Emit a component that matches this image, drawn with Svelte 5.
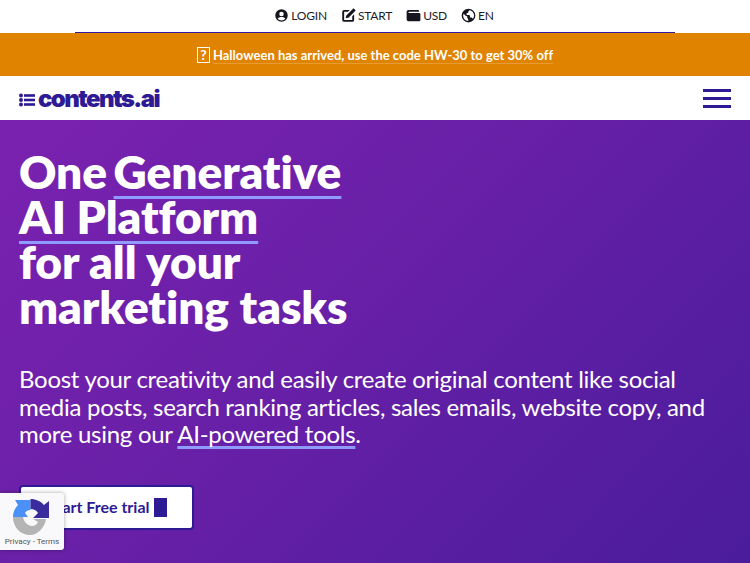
<script>
  const top = [
    { label: 'LOGIN', d: 'M12 2a10 10 0 1 0 0 20 10 10 0 0 0 0-20zm0 4a3.6 3.6 0 1 1 0 7.2A3.6 3.6 0 0 1 12 6zm0 14a8 8 0 0 1-6.2-2.9c.8-1.6 3.4-2.6 6.2-2.6s5.400 1 6.200 2.600A8 8 0 0 1 12 20z' },
    { label: 'START', d: 'M2 6a3 3 0 0 1 3-3h9l-3 3H5v13h13v-6l3-3v9a3 3 0 0 1-3 3H5a3 3 0 0 1-3-3zM20 0.500l3.500 3.500L12 15.500l-4.500 1 1-4.500z' },
    { label: 'USD', d: 'M4 3h15a2 2 0 0 1 2 2v1H5a1 1 0 0 0 0 2h16a2 2 0 0 1 2 2v9a2 2 0 0 1-2 2H4a3 3 0 0 1-3-3V6a3 3 0 0 1 3-3z' },
    { label: 'EN', d: 'M12 1a11 11 0 1 0 0 22 11 11 0 0 0 0-22zM3.500 12c0-1.100.2-2.100.6-3l3.400 3.500 2.500 1v2.500l1.500 1.500v3.400A8.500 8.500 0 0 1 3.500 12zm15.500 5.200-2-2.200h-2.500v-2.500l-1.500-1.500h-4v-2.500l2.500-1V6l2-2.300h1A8.500 8.500 0 0 1 19 17.200z' }
  ];
</script>

<div class="top">
  <div class="top-inner">
    {#each top as item}
      <a class="top-item" href="#top">
        <svg viewBox="0 0 24 24" class="top-icon"><path d={item.d} fill-rule="evenodd" /></svg>
        <span>{item.label}</span>
      </a>
    {/each}
  </div>
</div>

<div class="promo"><span class="box">?</span><span class="promo-text">Halloween has arrived, use the code HW-30 to get 30% off</span></div>

<nav class="nav">
  <a class="logo" href="#top">
    <svg viewBox="0 0 16 14" class="logo-icon">
      <circle cx="2" cy="2.500" r="2" /><circle cx="2" cy="7" r="2" /><circle cx="2" cy="11.500" r="2" />
      <rect x="5" y="1.200" width="11" height="2.600" /><rect x="5" y="5.700" width="11" height="2.600" /><rect x="5" y="10.200" width="11" height="2.600" />
    </svg>
    <span>contents.ai</span>
  </a>
  <div class="burger"><i></i><i></i><i></i></div>
</nav>

<main class="hero">
  <h1>One <span class="u first">Generative</span><br /><span class="u">AI Platform</span><br />for all your<br />marketing tasks</h1>
  <p>Boost your creativity and easily create original content like social media posts, search ranking articles, sales emails, website copy, and more using our <a href="#top">AI-powered tools</a>.</p>
  <a class="cta" href="#top">Start Free trial <span class="square"></span></a>
</main>

<div class="recaptcha">
  <svg viewBox="0 0 36 36" class="rc-icon">
    <path d="M0 18C0 13 2 9 5 6L2 1H17.500V11C15 11 13 12 12 14L15 18Z" fill="#4a90f7" />
    <path d="M17.500 0C23 0 28 2.500 31 6L36 2V19H20L25 14C23 11 21 10 17.500 10Z" fill="#3a2c9c" />
    <path d="M0 18H10C11 23.500 15 27 19 27C22 27 24 25 25 23L20 20H33C32 28 25 36 17 36C7 36 0 28 0 18Z" fill="#b4b4b4" />
  </svg>
  <div class="rc-text">Privacy - Terms</div>
</div>

<style>
  :global(body) {
    margin: 0;
    font-family: Lato, sans-serif;
    font-variant-ligatures: none;
    height: 563px;
    overflow: hidden;
    background: #5f1ea4;
  }
  a { color: inherit; text-decoration: none; }
  .top {
    height: 33px;
    background: #fff;
    box-sizing: border-box;
    padding: 0 75px;
  }
  .top-inner {
    height: 33px;
    box-sizing: border-box;
    border-bottom: 1px solid #2e1a9a;
    display: flex;
    align-items: center;
    justify-content: center;
    gap: 14px;
    padding-bottom: 1px;
    padding-left: 18px;
  }
  .top-item {
    display: flex;
    align-items: center;
    gap: 2px;
    font-size: 12px;
    letter-spacing: -.2px;
    color: #1c1c2a;
  }
  .top-icon { width: 15px; height: 15px; fill: #15151f; }
  .promo {
    height: 43px;
    background: #e08300;
    color: #fff;
    display: flex;
    align-items: center;
    justify-content: center;
    font-size: 13px;
    font-weight: 700;
    gap: 3px;
    padding-top: 3px;
    box-sizing: border-box;
  }
  .box {
    box-sizing: border-box;
    width: 13px;
    height: 16px;
    margin-top: -3px;
    border: 1.500px solid #fff;
    font-size: 14px;
    line-height: 13px;
    text-align: center;
  }
  .promo-text { border-bottom: 1px solid rgba(255,255,255,.2); line-height: 15px; }
  .nav {
    height: 44px;
    background: #fff;
    display: flex;
    align-items: center;
    justify-content: space-between;
    padding: 0 19px;
  }
  .logo {
    display: flex;
    align-items: center;
    gap: 3px;
    color: #2e1a94;
    font-family: Inter, sans-serif;
    font-weight: 900;
    font-size: 24px;
    letter-spacing: -1.600px;
  }
  .logo-icon { width: 16px; height: 14px; fill: #2e1a94; margin-top: 3px; }
  .burger { width: 28px; display: flex; flex-direction: column; gap: 5px; }
  .burger i { display: block; height: 3px; background: #2e1a94; }
  .hero {
    height: 443px;
    box-sizing: border-box;
    padding: 29px 19px 0;
    color: #fff;
    background: linear-gradient(135deg, #7a22b0 0%, #6a20a8 40%, #4a1c9c 100%);
  }
  h1 {
    margin: 0;
    font-size: 46px;
    font-weight: 800;
    line-height: 45px;
    letter-spacing: -.05px;
  }
  .u {
    text-decoration: underline 3px #8f9bff;
    text-underline-offset: 7px;
    text-decoration-skip-ink: none;
  }
  .first { margin-left: -4px; }
  p {
    margin: 36px 0 0;
    font-size: 24px;
    letter-spacing: -.28px;
    line-height: 27.5px;
  }
  p a {
    text-decoration: underline 2.500px #8f9bff;
    text-underline-offset: 3px;
    text-decoration-skip-ink: none;
  }
  .cta {
    margin-top: 37px;
    display: inline-flex;
    align-items: center;
    box-sizing: border-box;
    height: 45px;
    padding: 0 25px 2px 27px;
    background: #fff;
    border: 2px solid #2e1a94;
    border-radius: 4px;
    color: #2e1a94;
    font-weight: 700;
    font-size: 16px;
    gap: 1px;
    white-space: pre;
  }
  .square { width: 13px; height: 19px; background: #2e1a94; margin-bottom: -2px; }
  .recaptcha {
    position: absolute;
    left: 0;
    top: 493px;
    width: 64px;
    height: 57px;
    background: #f9f9fb;
    border-radius: 0 3px 3px 0;
    box-shadow: 0 0 4px rgba(0,0,0,.35);
    text-align: center;
  }
  .rc-icon { width: 36px; height: 36px; display: block; margin: 6px 0 0 13px; }
  .rc-text { font-family: Roboto, sans-serif; font-size: 8px; color: #555; margin-top: 2px; }
</style>
